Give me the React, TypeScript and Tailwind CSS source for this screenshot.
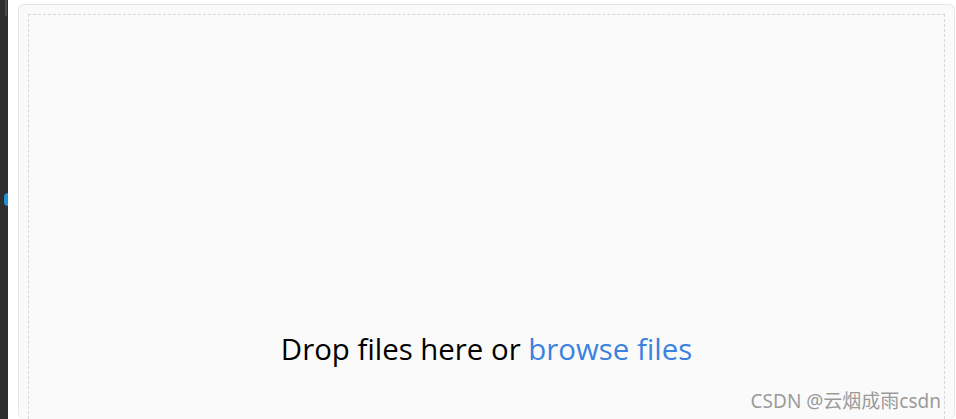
import React from 'react';

export default function App() {
    return (
        <div className="flex h-[419px] w-[956px] overflow-hidden bg-white font-['Open_Sans',sans-serif]">
            {/* dark editor edge on the left */}
            <div className="flex w-[8px] flex-col bg-[#2d2d2d]">
                <div className="ml-[5px] h-[16px] w-[2px] bg-[#4a4a4a]" />
                <div className="ml-[4px] mt-[177px] h-[13px] w-[4px] rounded-l-full bg-[#1f8fd6]" />
            </div>

            <div className="relative flex flex-1 pl-[10px] pr-[1px] pt-[4px]">
                <div className="flex flex-1 rounded-[6px] border border-b-0 border-[#e6e6e6] bg-[#fafafa] px-[9px] pt-[9px]">
                    <div className="flex flex-1 flex-col items-center justify-end border border-b-0 border-dashed border-[#d6d6d6] pb-[55px]">
                        <p className="text-[29.4px] leading-none text-black">
                            Drop files here or <span className="text-[#3b82e0]">browse files</span>
                        </p>
                    </div>
                </div>

                {/* watermark */}
                <span className="absolute bottom-[8px] right-[15px] font-['Noto_Sans','Noto_Sans_CJK_SC',sans-serif] text-[19px] leading-none text-[#9a9a9a]">
                    CSDN @云烟成雨csdn
                </span>
            </div>
        </div>
    );
}
